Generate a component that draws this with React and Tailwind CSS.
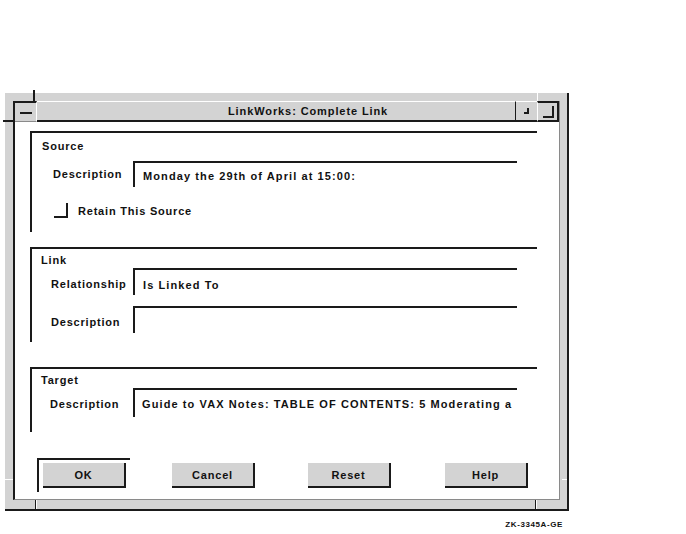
import React from 'react';

function Label({ children, className }) {
  return <div className={'w-[101px] shrink-0 ' + className}>{children}</div>;
}

function Btn({ children, className = '' }) {
  return (
    <div className={'w-[83px] h-[25px] shrink-0 bg-[#d3d3d3] border-r-2 border-b-2 border-[#1a1a1a] flex items-center justify-center pt-[2px] ' + className}>
      {children}
    </div>
  );
}

export default function App() {
  return (
    <div className="w-[686px] h-[534px] bg-white pt-[93px] pl-[5px] font-['Liberation_Sans',Arial,sans-serif] text-[11px] font-bold text-[#111] tracking-[0.8px] leading-[13px]">
      {/* window frame */}
      <div className="relative w-[564px] h-[418px] bg-[#d3d3d3] border-r-2 border-b-2 border-[#1a1a1a] pt-[8px] pl-[8px] pr-[7px] pb-[9px] flex flex-col">
        {/* resize corner marks */}
        <span className="absolute left-[28px] top-[-3px] w-[2px] h-[11px] bg-[#1a1a1a]" />
        <span className="absolute left-[-2px] top-[27px] w-[10px] h-[2px] bg-[#1a1a1a]" />
        <span className="absolute left-[532px] top-0 w-[1px] h-[8px] bg-white" />
        <span className="absolute left-0 top-[386px] w-[8px] h-[1px] bg-white" />
        <span className="absolute left-[557px] top-[386px] w-[5px] h-[1px] bg-white" />
        <span className="absolute left-[30px] top-[407px] w-[1px] h-[9px] bg-[#1a1a1a]" />
        <span className="absolute left-[31px] top-[407px] w-[1px] h-[9px] bg-white" />
        <span className="absolute left-[530px] top-[407px] w-[1px] h-[9px] bg-[#1a1a1a]" />
        <span className="absolute left-[531px] top-[407px] w-[1px] h-[9px] bg-white" />

        <div className="flex-1 flex flex-col border-l-2 border-l-[#1a1a1a] border-r border-r-[#8a8a8a] border-b border-b-[#8a8a8a]">
          {/* title bar */}
          <div className="h-[21px] shrink-0 flex">
            <div className="w-[22px] border-t-2 border-t-[#1a1a1a] border-r border-r-white border-b border-b-[#8a8a8a] flex items-center justify-center">
              <span className="w-[12px] h-[2px] bg-[#1a1a1a] mt-[1px] ml-[1px]" />
            </div>
            <div className="flex-1 border-t border-t-white border-b-2 border-b-[#1a1a1a] pl-[191px] flex items-center whitespace-nowrap tracking-[0.9px]">
              LinkWorks: Complete Link
            </div>
            <div className="w-[22px] border-l border-l-[#1a1a1a] border-t border-t-white border-b-2 border-b-[#1a1a1a] flex items-center justify-center">
              <span className="w-[5px] h-[6px] border-r-2 border-b-2 border-[#1a1a1a]" />
            </div>
            <div className="w-[22px] border-l border-l-white border-t-2 border-t-[#1a1a1a] border-r-2 border-r-[#1a1a1a] border-b-2 border-b-[#1a1a1a] flex items-center justify-center">
              <span className="w-[11px] h-[12px] border-r-2 border-b-2 border-[#1a1a1a] ml-[1px]" />
            </div>
          </div>

          {/* dialog body */}
          <div className="flex-1 bg-white pl-[15px] pr-[22px] pt-[9px] flex flex-col whitespace-nowrap">
            {/* Source */}
            <div className="h-[101px] shrink-0 border-t-2 border-l-2 border-[#1a1a1a] flex flex-col">
              <div className="pl-[10px] pt-[7px]">Source</div>
              <div className="mt-[8px] flex items-start">
                <Label className="pl-[21px] pt-[7px]">Description</Label>
                <div className="w-[384px] h-[26px] border-t-2 border-l-2 border-[#1a1a1a] pl-[8px] pt-[7px] tracking-[1.1px]">
                  Monday the 29th of April at 15:00:
                </div>
              </div>
              <div className="mt-[16px] flex items-end">
                <span className="ml-[22px] w-[14px] h-[15px] border-r-2 border-b-2 border-[#1a1a1a]" />
                <span className="ml-[10px]">Retain This Source</span>
              </div>
            </div>

            {/* Link */}
            <div className="mt-[15px] h-[95px] shrink-0 border-t-2 border-l-2 border-[#1a1a1a] flex flex-col">
              <div className="pl-[9px] pt-[5px]">Link</div>
              <div className="mt-[1px] flex items-start">
                <Label className="pl-[19px] pt-[10px]">Relationship</Label>
                <div className="w-[384px] h-[27px] border-t-2 border-l-2 border-[#1a1a1a] pl-[8px] pt-[9px] tracking-[1.1px]">
                  Is Linked To
                </div>
              </div>
              <div className="mt-[11px] flex items-start">
                <Label className="pl-[19px] pt-[10px]">Description</Label>
                <div className="w-[384px] h-[27px] border-t-2 border-l-2 border-[#1a1a1a]" />
              </div>
            </div>

            {/* Target */}
            <div className="mt-[25px] h-[65px] shrink-0 border-t-2 border-l-2 border-[#1a1a1a] flex flex-col">
              <div className="pl-[9px] pt-[5px]">Target</div>
              <div className="mt-[1px] flex items-start">
                <Label className="pl-[18px] pt-[10px]">Description</Label>
                <div className="w-[384px] h-[29px] border-t-2 border-l-2 border-[#1a1a1a] pl-[7px] pt-[8px] overflow-hidden tracking-[1.1px]">
                  Guide to VAX Notes: TABLE OF CONTENTS: 5 Moderating a
                </div>
              </div>
            </div>

            {/* buttons */}
            <div className="mt-[26px] pl-[7px] flex items-start">
              <div className="w-[93px] h-[34px] shrink-0 border-t-2 border-l-2 border-[#1a1a1a] pt-[3px] pl-[4px]">
                <Btn>OK</Btn>
              </div>
              <Btn className="ml-[42px] mt-[5px]">Cancel</Btn>
              <Btn className="ml-[53px] mt-[5px]">Reset</Btn>
              <Btn className="ml-[54px] mt-[5px]">Help</Btn>
            </div>
          </div>
        </div>
      </div>

      <div className="w-[564px] mt-[9px] pr-[6px] text-right text-[8px] leading-[10px] tracking-[0.6px]">
        ZK-3345A-GE
      </div>
    </div>
  );
}
